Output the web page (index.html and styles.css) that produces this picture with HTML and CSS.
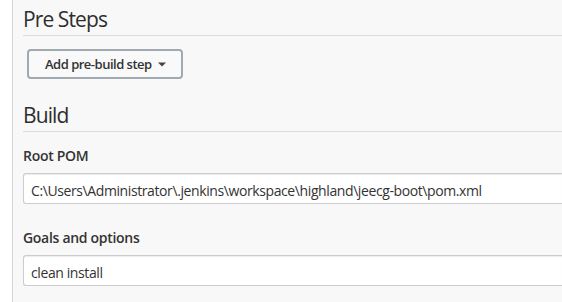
FILE: index.html
```html
<!DOCTYPE html>
<html lang="en">
<head>
<meta charset="utf-8">
<title>Jenkins job configuration</title>
<link rel="stylesheet" href="styles.css">
</head>
<body>
<div class="page">
  <div class="panel">
    <section class="section section-pre">
      <h2 class="section-header">Pre Steps</h2>
      <div class="section-body">
        <button class="btn-dropdown" type="button">
          <span class="btn-label">Add pre-build step</span>
          <svg class="caret" width="8" height="5" viewBox="0 0 8 5" aria-hidden="true"><path d="M0 0.5h8L4 4.5z"/></svg>
        </button>
      </div>
    </section>
    <section class="section section-build">
      <h2 class="section-header">Build</h2>
      <div class="field">
        <div class="field-label">Root POM</div>
        <input class="text-input" type="text" value="C:\Users\Administrator\.jenkins\workspace\highland\jeecg-boot\pom.xml">
      </div>
      <div class="field field-goals">
        <div class="field-label">Goals and options</div>
        <input class="text-input" type="text" value="clean install">
      </div>
    </section>
  </div>
</div>
</body>
</html>
```
FILE: styles.css
```css
html, body {
  margin: 0;
  padding: 0;
  background: #ffffff;
  overflow: hidden;
}

body {
  font-family: "Open Sans", "Noto Sans", "Liberation Sans", sans-serif;
  color: #333333;
}

.page {
  padding-left: 12px;
}

.panel {
  border-left: 1px solid #d3d3d3;
  background: #f8f8f8;
  padding-left: 10px;
  min-height: 302px;
}

.section-header {
  margin: 0;
  padding: 7px 0 3px;
  font-size: 21px;
  line-height: 25px;
  font-weight: 400;
  letter-spacing: -0.9px;
  color: #2e2e2e;
  border-bottom: 1px solid #dcdcdc;
}

.section-body {
  padding: 13px 0 0 4px;
}

.btn-dropdown {
  display: inline-flex;
  align-items: center;
  gap: 6px;
  box-sizing: border-box;
  width: 156px;
  height: 30px;
  padding: 0 0 0 16px;
  margin: 0;
  border: 2px solid #a0a8b0;
  border-radius: 4px;
  background: #f9f9f9;
  font-family: inherit;
  font-size: 13px;
  font-weight: 600;
  letter-spacing: -0.5px;
  color: #333333;
}

.caret {
  fill: #444444;
  display: block;
}

.section-build {
  margin-top: 17px;
}

.field {
  padding-top: 14px;
}

.field-goals {
  padding-top: 24px;
}

.field-label {
  font-size: 14px;
  line-height: 20px;
  font-weight: 600;
  letter-spacing: -0.3px;
  margin-bottom: 7px;
}

.text-input {
  display: block;
  box-sizing: border-box;
  width: 100%;
  height: 31px;
  margin: 0;
  padding: 4px 7px 0;
  border: 1px solid #cccccc;
  border-right: none;
  border-radius: 3px 0 0 3px;
  background: #ffffff;
  box-shadow: inset 0 1px 1px rgba(0, 0, 0, 0.075);
  font-family: inherit;
  font-size: 14px;
  letter-spacing: -0.4px;
  color: #333333;
  outline: none;
}
```
